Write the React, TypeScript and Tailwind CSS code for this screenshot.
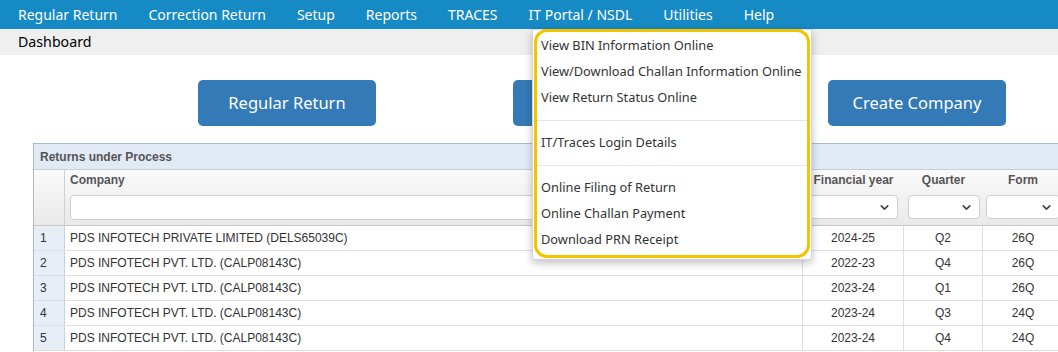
import { ChevronDown } from 'lucide-react';

const menu = ['Regular Return', 'Correction Return', 'Setup', 'Reports', 'TRACES', 'IT Portal / NSDL', 'Utilities', 'Help'];

const rows = [
  { company: 'PDS INFOTECH PRIVATE LIMITED (DELS65039C)', fy: '2024-25', q: 'Q2', form: '26Q' },
  { company: 'PDS INFOTECH PVT. LTD. (CALP08143C)', fy: '2022-23', q: 'Q4', form: '26Q' },
  { company: 'PDS INFOTECH PVT. LTD. (CALP08143C)', fy: '2023-24', q: 'Q1', form: '26Q' },
  { company: 'PDS INFOTECH PVT. LTD. (CALP08143C)', fy: '2023-24', q: 'Q3', form: '24Q' },
  { company: 'PDS INFOTECH PVT. LTD. (CALP08143C)', fy: '2023-24', q: 'Q4', form: '24Q' },
];

function SelectBox({ width }: { width: string }) {
  return (
    <div className={`${width} h-[24px] bg-white border border-[#cfcfcf] rounded-[4px] flex items-center justify-end pr-[6px]`}>
      <ChevronDown size={13} strokeWidth={3} className="text-[#444]" />
    </div>
  );
}

export default function App() {
  return (
    <div className="relative w-[1058px] h-[352px] overflow-hidden bg-white font-['Noto_Sans',sans-serif]">
      {/* Top menu */}
      <nav className="h-[29px] bg-[#168ac5] flex items-center pl-[18px] gap-[31px] text-white text-[14px]">
        {menu.map((m) => (
          <span key={m} className="leading-none">{m}</span>
        ))}
      </nav>

      {/* Breadcrumb */}
      <div className="h-[26px] bg-[#efefef] flex items-center pl-[18px] text-[14.2px] text-black">Dashboard</div>

      {/* Quick buttons */}
      <div className="flex pl-[198px] gap-[137px] pt-[25px]">
        <button className="w-[178px] h-[46px] bg-[#337ab7] rounded-[5px] text-white text-[16.5px]">Regular Return</button>
        <button className="w-[178px] h-[46px] bg-[#337ab7] rounded-[5px] text-white text-[16.5px]" aria-label="Correction Return" />
        <button className="w-[178px] h-[46px] bg-[#337ab7] rounded-[5px] text-white text-[16.5px]">Create Company</button>
      </div>

      {/* Grid */}
      <div className="ml-[33px] mt-[17px] w-[1060px] border-l border-t border-[#a9b8cc] font-['Liberation_Sans',Arial,sans-serif] text-[12px]">
        <div className="h-[26px] bg-[#e2eaf6] border-b border-[#c5d0de] flex items-center pl-[6px] font-bold text-[#555]">
          Returns under Process
        </div>
        <div className="flex h-[56px] bg-gradient-to-b from-[#fafafa] to-[#e9e9e9] border-b border-[#c8c8c8] text-[#555] font-bold">
          <div className="w-[31px] border-r border-[#d0d0d0]" />
          <div className="w-[738px] pl-[5px] pt-[1px] pr-[4px] flex flex-col gap-[6px] border-r border-[#d8d8d8]">
            <span>Company</span>
            <div className="h-[25px] bg-white border border-[#cfcfcf] rounded-[4px]" />
          </div>
          <div className="w-[101px] pt-[1px] px-[7px] flex flex-col gap-[6px] items-center">
            <span>Financial year</span>
            <SelectBox width="w-[89px]" />
          </div>
          <div className="w-[79px] pt-[1px] px-[3px] flex flex-col gap-[6px] items-center">
            <span>Quarter</span>
            <SelectBox width="w-[72px]" />
          </div>
          <div className="w-[80px] pt-[1px] px-[3px] flex flex-col gap-[6px] items-center">
            <span>Form</span>
            <SelectBox width="w-[74px]" />
          </div>
        </div>
        {rows.map((r, i) => (
          <div key={i} className="flex h-[25px] border-b border-[#dedede] text-[#333]">
            <div className="w-[31px] bg-[#e8eef7] border-r border-[#c8d2de] flex items-center pl-[6px]">{i + 1}</div>
            <div className="w-[738px] flex items-center pl-[5px] border-r border-[#dedede]">{r.company}</div>
            <div className="w-[101px] flex items-center justify-center border-r border-[#dedede]">{r.fy}</div>
            <div className="w-[79px] flex items-center justify-center border-r border-[#dedede]">{r.q}</div>
            <div className="w-[80px] flex items-center justify-center">{r.form}</div>
          </div>
        ))}
      </div>

      {/* IT Portal / NSDL dropdown */}
      <div className="absolute left-[532px] top-[29px] w-[280px] bg-white shadow-[0_3px_8px_rgba(0,0,0,0.25)] border border-[#d6d6d6] rounded-b-[3px] pt-[3px] pb-[6px] text-[12.8px] text-[#333]">
        <div className="absolute left-[1px] top-[-1px] w-[276px] h-[229px] border-[3px] border-[#f5c400] rounded-[13px] pointer-events-none" />
        {['View BIN Information Online', 'View/Download Challan Information Online', 'View Return Status Online'].map((t) => (
          <div key={t} className="h-[26px] flex items-center pl-[8px] whitespace-nowrap">{t}</div>
        ))}
        <div className="my-[9px] h-px bg-[#e5e5e5]" />
        <div className="h-[26px] flex items-center pl-[8px]">IT/Traces Login Details</div>
        <div className="my-[9px] h-px bg-[#e5e5e5]" />
        {['Online Filing of Return', 'Online Challan Payment', 'Download PRN Receipt'].map((t) => (
          <div key={t} className="h-[26px] flex items-center pl-[8px]">{t}</div>
        ))}
      </div>
    </div>
  );
}
